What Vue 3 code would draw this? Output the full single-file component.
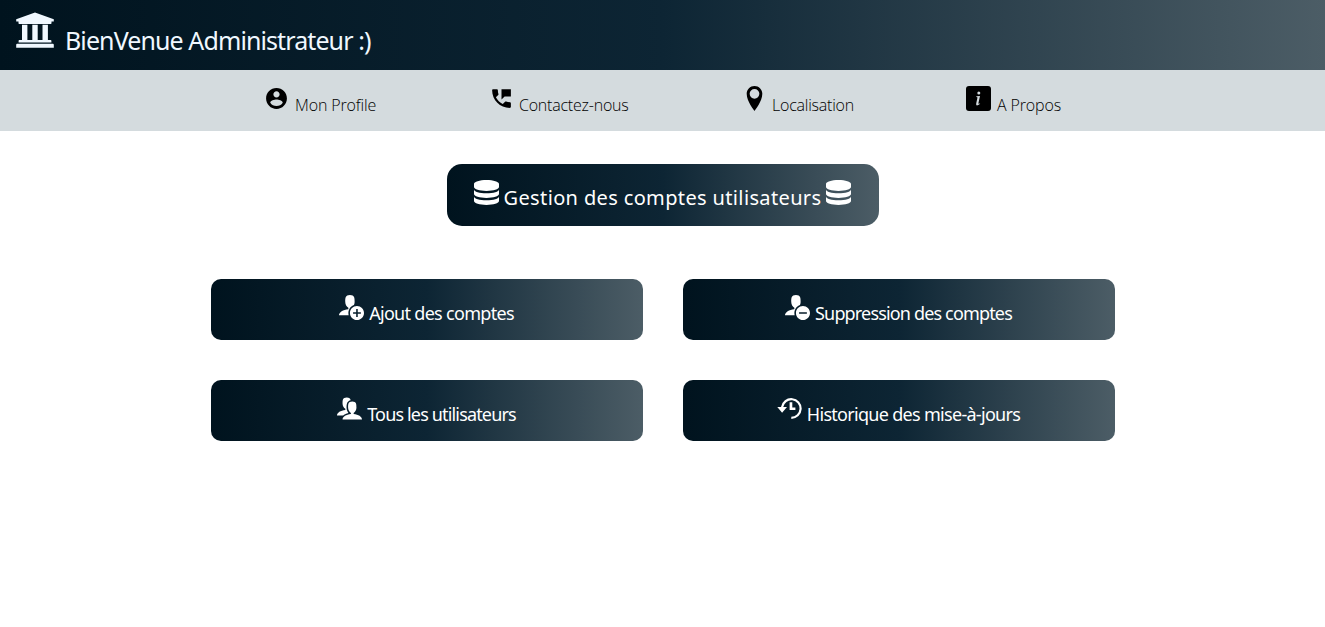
<script setup>
const user = 'M12 23c0-4.726 2.996-8.765 7.189-10.319 0.509-1.142 0.811-2.411 0.811-3.681 0-4.971 0-9-6-9s-6 4.029-6 9c0 3.096 1.797 6.191 4 7.432v1.649c-6.784 0.555-12 3.888-12 7.918h12.416c-0.271-0.954-0.416-1.96-0.416-3z'
const disc = 'M23 14c-4.971 0-9 4.029-9 9s4.029 9 9 9c4.971 0 9-4.029 9-9s-4.029-9-9-9z'
const database = 'M8 0c-4.418 0-8 1.119-8 2.5v2c0 1.381 3.582 2.5 8 2.5s8-1.119 8-2.5v-2c0-1.381-3.582-2.5-8-2.5z M8 8.5c-4.418 0-8-1.119-8-2.5v3c0 1.381 3.582 2.5 8 2.5s8-1.119 8-2.5v-3c0 1.381-3.582 2.5-8 2.5z M8 13c-4.418 0-8-1.119-8-2.5v3c0 1.381 3.582 2.5 8 2.5s8-1.119 8-2.5v-3c0 1.381-3.582 2.5-8 2.5z'

const actions = [
  { id: 'add', label: 'Ajout des comptes', box: '0 0 32 32', d: `${user} ${disc}M28 24h-4v4h-2v-4h-4v-2h4v-4h2v4h4v2z` },
  { id: 'remove', label: 'Suppression des comptes', box: '0 0 32 32', d: `${user} ${disc}M28 24h-10v-2h10v2z` },
  { id: 'all', label: 'Tous les utilisateurs', box: '0 0 36 32', d: 'M24 24.082v-1.649c2.203-1.241 4-4.337 4-7.432 0-4.971 0-9-6-9s-6 4.029-6 9c0 3.096 1.797 6.191 4 7.432v1.649c-6.784 0.555-12 3.888-12 7.918h28c0-4.030-5.216-7.364-12-7.918z M10.225 24.854c1.728-1.13 3.877-1.989 6.243-2.513-0.47-0.556-0.897-1.176-1.265-1.844-0.95-1.726-1.453-3.627-1.453-5.497 0-2.689 0-5.228 0.956-7.305 0.928-2.016 2.598-3.265 4.976-3.734-0.529-2.39-1.936-3.961-5.682-3.961-6 0-6 4.029-6 9 0 3.096 1.797 6.191 4 7.432v1.649c-6.784 0.555-12 3.888-12 7.918h8.719c0.454-0.403 0.956-0.787 1.506-1.146z' },
  { id: 'history', label: 'Historique des mise-à-jours', box: '0 0 25 25', d: 'M.3 11H4A10.4 10.4 0 1 1 14.3 22.9V20.7A8.2 8.2 0 1 0 6.240 11H10L5.100 16.700ZM12.600 6.300H15.300V11.400H18.400V14H12.600Z' }
]
</script>

<template>
  <header class="banner">
    <svg class="bank" viewBox="0 0 38 38">
      <path d="M19 .4 37.8 7.3V9.5H35.5V11.2Q35.5 12 34.7 12H3.3Q2.5 12 2.5 11.2V9.5H.2V7.3Z" />
      <path d="M6 12.7h5.4v15.4H6zM16.3 12.7h5.4v15.4h-5.4zM26.5 12.7h5.4v15.4h-5.4z" />
      <path d="M3.4 28h31.2q.8 0 .8.8v1.6H2.6v-1.6q0-.8.8-.8zM1.2 31.8h35.6q1 0 1 1v3H.2v-3q0-1 1-1z" />
    </svg>
    <span class="welcome">BienVenue Administrateur :)</span>
  </header>

  <nav class="menu">
    <a class="item profile">
      <svg class="icon" viewBox="0 0 24 24"><path d="M12 2C6.48 2 2 6.48 2 12s4.48 10 10 10 10-4.48 10-10S17.52 2 12 2zm0 3c1.66 0 3 1.34 3 3s-1.34 3-3 3-3-1.34-3-3 1.34-3 3-3zm0 14.2c-2.5 0-4.71-1.28-6-3.22.03-1.99 4-3.08 6-3.08 1.99 0 5.97 1.09 6 3.08-1.29 1.94-3.5 3.22-6 3.22z" /></svg>
      <span>Mon Profile</span>
    </a>
    <a class="item contact">
      <svg class="icon" viewBox="0 0 24 24"><path d="M20 15.5c-1.25 0-2.45-.2-3.57-.57-.35-.11-.74-.03-1.02.24l-2.2 2.2c-2.83-1.44-5.15-3.75-6.59-6.58l2.2-2.21c.28-.27.36-.66.25-1.01C8.7 6.45 8.5 5.25 8.5 4c0-.55-.45-1-1-1H4c-.55 0-1 .45-1 1 0 9.39 7.61 17 17 17 .55 0 1-.45 1-1v-3.5c0-.55-.45-1-1-1zM12 3v10l3-3h6V3h-9z" /></svg>
      <span>Contactez-nous</span>
    </a>
    <a class="item place">
      <svg class="icon" viewBox="0 0 32 32"><path fill-rule="evenodd" d="M16 0C10.480 0 6 4.480 6 10c0 10 10 22 10 22s10-12 10-22c0-5.520-4.480-10-10-10zM16 16.200a6.200 6.200 0 1 1 0-12.400 6.200 6.200 0 0 1 0 12.400z" /></svg>
      <span>Localisation</span>
    </a>
    <a class="item about">
      <svg class="icon" viewBox="0 0 25 25">
        <rect width="25" height="25" rx="3" />
        <circle class="mark" cx="12.800" cy="7.100" r="1.500" />
        <path class="mark" d="M10.400 10.300 14 9.900 12.400 17.300Q12.300 18.200 14.100 17.200L13.900 18.100Q9.600 21 10.200 17.500L11.500 11.400Q11.500 10.900 10.200 11Z" />
      </svg>
      <span>A Propos</span>
    </a>
  </nav>

  <main class="content">
    <h1 class="title">
      <svg class="icon" viewBox="0 0 16 16"><path :d="database" /></svg>
      <span>Gestion des comptes utilisateurs</span>
      <svg class="icon" viewBox="0 0 16 16"><path :d="database" /></svg>
    </h1>
    <div class="grid">
      <button v-for="a in actions" :key="a.id" class="action" :class="a.id">
        <svg class="icon" :viewBox="a.box"><path :d="a.d" fill-rule="evenodd" /></svg>
        <span>{{ a.label }}</span>
      </button>
    </div>
  </main>
</template>

<style>
body { background: #fff; }
#app { font-family: "Noto Sans", "Open Sans", sans-serif; }
</style>

<style scoped>
.banner, .title, .action {
  background: linear-gradient(90deg, #00131e 0%, #0d2534 50%, #4c5d66 100%);
  color: #fff;
}
svg { fill: currentColor; flex: none; }
span { white-space: nowrap; }
.banner {
  height: 70px;
  box-sizing: border-box;
  padding: 12px 0 0 16px;
  display: flex;
  align-items: baseline;
  color: #f0f8ff;
}
.bank { width: 38px; height: 38px; }
.welcome { margin-left: 11px; font-size: 25px; line-height: 30px; letter-spacing: -.9px; }
.menu {
  height: 61px;
  box-sizing: border-box;
  padding-top: 16px;
  background: #d4dbde;
  display: flex;
  justify-content: center;
  gap: 112px;
  color: #000;
}
.icon { width: 25px; height: 25px; }
.item { display: flex; align-items: baseline; gap: 6px; font-size: 16px; line-height: 22px; font-family: "Open Sans", "Noto Sans", sans-serif; font-weight: 340; letter-spacing: -.14px; }
.profile { width: 113px; }
.contact { width: 141px; gap: 5px; letter-spacing: -.22px; }
.place { width: 112px; gap: 5px; letter-spacing: -.22px; }
.about { width: 95px; gap: 6px; }
.mark { fill: #d4dbde; }
.content { padding-top: 33px; }
.title {
  width: 432px;
  height: 62px;
  box-sizing: border-box;
  margin: 0 auto;
  padding-top: 16px;
  border-radius: 15px;
  display: flex;
  justify-content: center;
  align-items: baseline;
  gap: 5px;
  font-size: 20px;
  line-height: 26px;
  font-weight: 400;
  letter-spacing: .36px;
}
.grid {
  display: grid;
  grid-template-columns: 432px 432px;
  gap: 40px;
  justify-content: center;
  margin-top: 53px;
}
.action {
  height: 61px;
  border: 0;
  border-radius: 10px;
  padding: 16px 0 0;
  display: flex;
  justify-content: center;
  align-items: baseline;
  gap: 5px;
  font: 400 18px/24px "Noto Sans", "Open Sans", sans-serif;
  letter-spacing: -.7px;
}
.remove, .all { letter-spacing: -.84px; }
</style>
